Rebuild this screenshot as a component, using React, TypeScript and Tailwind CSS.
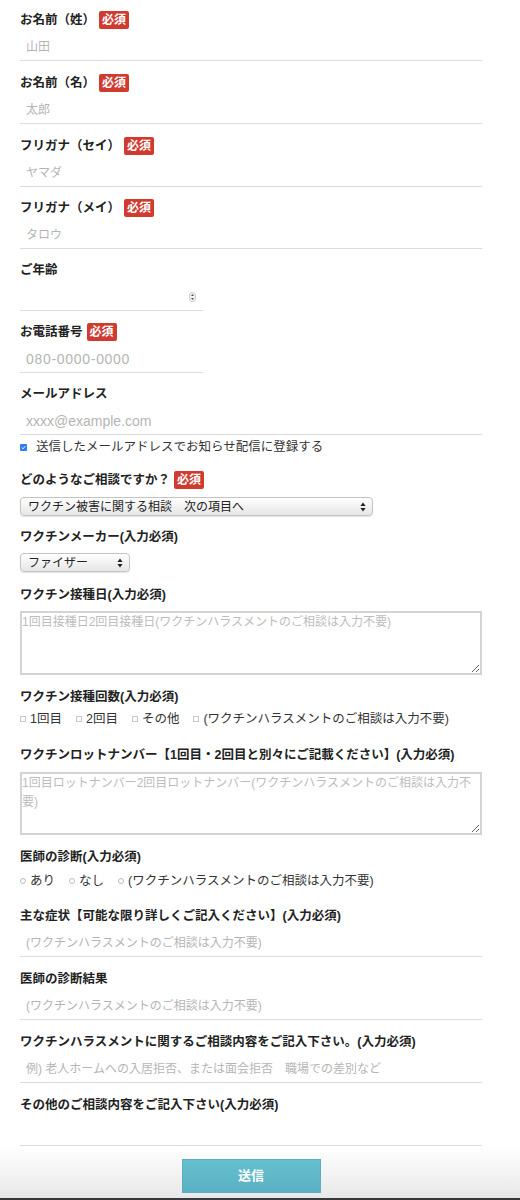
import React from "react";

const Badge = () => (
  <span className="ml-[4px] inline-flex h-[18px] items-center rounded-[2px] bg-[#d13a2f] px-[3px] text-[12px] font-bold leading-none text-white">
    必須
  </span>
);

function Label({
  children,
  req,
  className = "",
}: {
  children: React.ReactNode;
  req?: boolean;
  className?: string;
}) {
  return (
    <div
      className={`flex h-5 items-center text-[12.5px] font-bold text-[#222] ${className}`}
    >
      <span>{children}</span>
      {req && <Badge />}
    </div>
  );
}

function LineInput({
  placeholder,
  className = "",
  inputClass = "text-[12px]",
}: {
  placeholder?: string;
  className?: string;
  inputClass?: string;
}) {
  return (
    <div className={`mt-[4px] h-[27px] border-b border-[#dcdcdc] ${className}`}>
      <input
        type="text"
        placeholder={placeholder}
        className={`h-[26px] w-full bg-transparent px-[6px] text-[#333] outline-none placeholder:text-[#b5b5b5] ${inputClass}`}
      />
    </div>
  );
}

function SelectBox({ value, className = "" }: { value: string; className?: string }) {
  return (
    <div
      className={`flex h-[19px] items-center justify-between rounded-[4px] border border-[#c4c4c4] bg-gradient-to-b from-white to-[#e6e6e6] pl-[7px] pr-[6px] text-[12px] text-[#222] shadow-[0_1px_1px_rgba(0,0,0,0.12)] ${className}`}
    >
      <span>{value}</span>
      <svg width="6" height="10" viewBox="0 0 6 10">
        <path d="M3 0.5 L5.6 4 H0.4 Z" fill="#222" />
        <path d="M3 9.5 L5.6 6 H0.4 Z" fill="#222" />
      </svg>
    </div>
  );
}

function TextArea({ placeholder, className = "" }: { placeholder: string; className?: string }) {
  return (
    <textarea
      placeholder={placeholder}
      className={`block w-full resize-y border-2 border-[#d4d4d4] px-0 py-0 text-[12px] leading-[19px] text-[#333] outline-none placeholder:text-[#bcbcbc] ${className}`}
    />
  );
}

const Box = () => (
  <span className="inline-block h-[6px] w-[6px] border border-[#c8c8c8] bg-white" />
);
const Radio = () => (
  <span className="inline-block h-[6px] w-[6px] rounded-full border border-[#bcbcbc] bg-white" />
);

export default function App() {
  return (
    <div className="flex min-h-[1200px] w-full flex-col bg-white font-['Liberation_Sans','Noto_Sans_CJK_JP',sans-serif]">
      <div className="w-[482px] pl-[20px] pt-[10px]">
        <Label req>お名前（姓）</Label>
        <LineInput placeholder="山田" />

        <Label req className="mt-[12px]">お名前（名）</Label>
        <LineInput placeholder="太郎" />

        <Label req className="mt-[12px]">フリガナ（セイ）</Label>
        <LineInput placeholder="ヤマダ" />

        <Label req className="mt-[11px]">フリガナ（メイ）</Label>
        <LineInput placeholder="タロウ" />

        <Label className="mt-[11px]">ご年齢</Label>
        <div className="mt-[4px] flex h-[27px] w-[183px] items-center justify-end border-b border-[#dcdcdc] pr-[7px]">
          <svg width="7" height="10" viewBox="0 0 7 10">
            <rect x="0.5" y="0.5" width="6" height="9" rx="3" fill="#f4f4f4" stroke="#c8c8c8" />
            <path d="M3.5 2 L5 4 H2 Z" fill="#555" />
            <path d="M3.5 8 L5 6 H2 Z" fill="#555" />
          </svg>
        </div>

        <Label req className="mt-[11px]">お電話番号</Label>
        <LineInput
          placeholder="080-0000-0000"
          className="w-[183px]"
          inputClass="text-[14px] tracking-[0.7px]"
        />

        <Label className="mt-[11px]">メールアドレス</Label>
        <LineInput placeholder="xxxx@example.com" inputClass="text-[14px]" />

        <div className="mt-[5px] flex h-[14px] items-center gap-[9px] text-[12.5px] text-[#333]">
          <span className="flex h-[7px] w-[7px] items-center justify-center rounded-[1px] bg-[#2f7cf6]">
            <svg width="5" height="5" viewBox="0 0 5 5">
              <path d="M0.8 2.6 L2 3.8 L4.3 1.2" fill="none" stroke="white" strokeWidth="1" />
            </svg>
          </span>
          <span>送信したメールアドレスでお知らせ配信に登録する</span>
        </div>

        <Label req className="mt-[16px]">どのようなご相談ですか？</Label>
        <SelectBox value="ワクチン被害に関する相談　次の項目へ" className="mt-[7px] w-[353px]" />

        <Label className="mt-[11px]">ワクチンメーカー(入力必須)</Label>
        <SelectBox value="ファイザー" className="mt-[6px] w-[110px]" />

        <Label className="mt-[13px]">ワクチン接種日(入力必須)</Label>
        <TextArea
          placeholder="1回目接種日2回目接種日(ワクチンハラスメントのご相談は入力不要)"
          className="mt-[6px] h-[64px]"
        />

        <Label className="mt-[12px]">ワクチン接種回数(入力必須)</Label>
        <div className="mt-[5px] flex h-[14px] items-center gap-[14px] text-[12.5px] text-[#333]">
          {["1回目", "2回目", "その他", "(ワクチンハラスメントのご相談は入力不要)"].map((t) => (
            <span key={t} className="flex items-center gap-[4px]">
              <Box />
              <span>{t}</span>
            </span>
          ))}
        </div>

        <Label className="mt-[19px]">
          ワクチンロットナンバー【1回目・2回目と別々にご記載ください】(入力必須)
        </Label>
        <TextArea
          placeholder="1回目ロットナンバー2回目ロットナンバー(ワクチンハラスメントのご相談は入力不要)"
          className="mt-[7px] h-[63px]"
        />

        <Label className="mt-[12px]">医師の診断(入力必須)</Label>
        <div className="mt-[7px] flex h-[14px] items-center gap-[14px] text-[12.5px] text-[#333]">
          {["あり", "なし", "(ワクチンハラスメントのご相談は入力不要)"].map((t) => (
            <span key={t} className="flex items-center gap-[4px]">
              <Radio />
              <span>{t}</span>
            </span>
          ))}
        </div>

        <Label className="mt-[18px]">主な症状【可能な限り詳しくご記入ください】(入力必須)</Label>
        <LineInput placeholder="(ワクチンハラスメントのご相談は入力不要)" />

        <Label className="mt-[12px]">医師の診断結果</Label>
        <LineInput placeholder="(ワクチンハラスメントのご相談は入力不要)" />

        <Label className="mt-[12px]">ワクチンハラスメントに関するご相談内容をご記入下さい。(入力必須)</Label>
        <LineInput placeholder="例) 老人ホームへの入居拒否、または面会拒否　職場での差別など" />

        <Label className="mt-[12px]">その他のご相談内容をご記入下さい(入力必須)</Label>
        <LineInput />
      </div>

      <div className="mt-auto h-[52px] w-full bg-gradient-to-b from-white to-[#e8e8e8] pt-[13px]">
        <div className="w-[482px] pl-[20px]">
          <button
            type="button"
            className="mx-auto flex h-[34px] w-[139px] items-center justify-center border border-[#5aaebf] bg-gradient-to-b from-[#66c0cf] to-[#5ab0c2] text-[13px] font-bold text-white"
          >
            送信
          </button>
        </div>
      </div>
      <div className="h-[3px] w-full bg-[#38383d]" />
    </div>
  );
}
